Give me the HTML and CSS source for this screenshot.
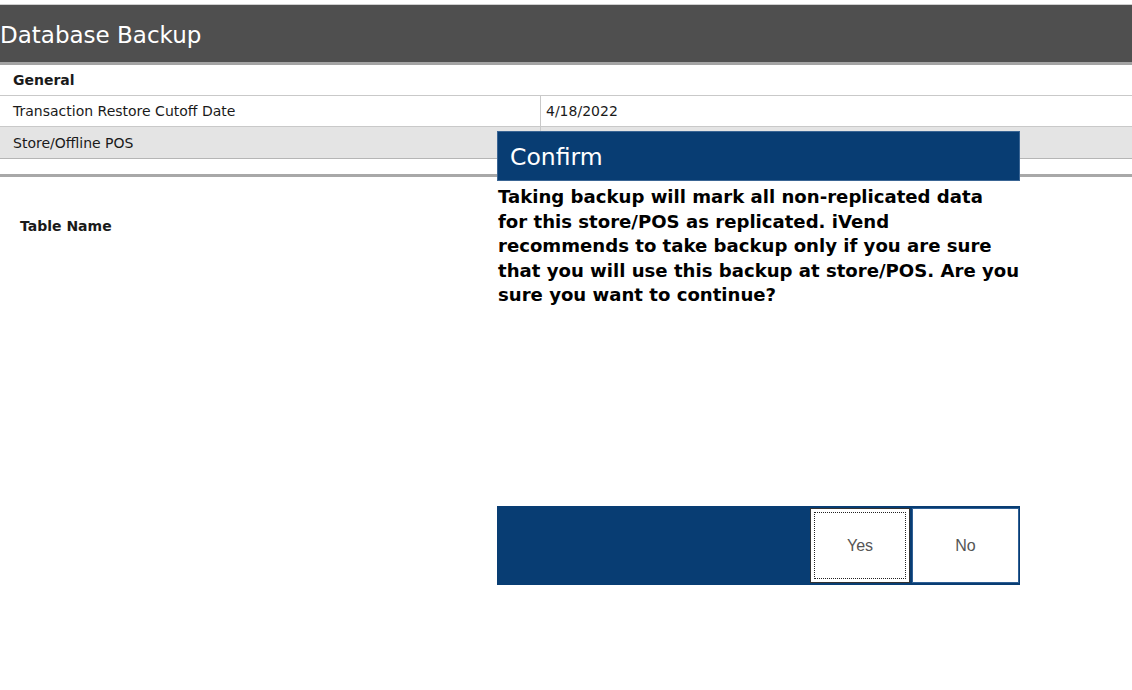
FILE: index.html
```html
<!DOCTYPE html>
<html lang="en">
<head>
<meta charset="UTF-8" />
<title>Database Backup</title>
<link rel="stylesheet" href="styles.css">
</head>
<body>
  <header class="page-title">Database Backup</header>

  <section class="props">
    <div class="prop-row prop-group">General</div>
    <div class="prop-row">
      <div class="prop-name">Transaction Restore Cutoff Date</div>
      <div class="prop-value">4/18/2022</div>
    </div>
    <div class="prop-row prop-alt">
      <div class="prop-name">Store/Offline POS</div>
      <div class="prop-value"></div>
    </div>
  </section>

  <section class="tables">
    <div class="tables-head">Table Name</div>
  </section>

  <div class="dialog">
    <div class="dialog-title">Confirm</div>
    <div class="dialog-body">
      Taking backup will mark all non-replicated data<br>
      for this store/POS as replicated. iVend<br>
      recommends to take backup only if you are sure<br>
      that you will use this backup at store/POS. Are you<br>
      sure you want to continue?
    </div>
    <div class="dialog-buttons">
      <button class="btn btn-focus">Yes</button>
      <button class="btn">No</button>
    </div>
  </div>
</body>
</html>
```

FILE: styles.css
```css
/* Reset */
* {
  box-sizing: border-box;
}
body {
  margin: 0;
  font-family: 'DejaVu Sans', Tahoma, Verdana, sans-serif;
  font-size: 14px;
  color: #1a1a1a;
  background: #fff;
  min-height: 100vh;
  position: relative;
}

/* Header */
.page-title {
  margin-top: 4px;
  border-top: 1px solid #cfcfcf;
  border-bottom: 3px solid #a3a3a3;
  background: #4f4f4f;
  color: #fff;
  height: 61px;
  padding-top: 15px;
  font-size: 23px;
  line-height: 30px;
}

/* Properties */
.props {
  border-bottom: 1px solid #b5b5b5;
}
.prop-row {
  display: flex;
  height: 31px;
  align-items: center;
  border-bottom: 1px solid #c9c9c9;
}
.prop-row:last-child {
  border-bottom: none;
}
.prop-group {
  padding-left: 13px;
  font-weight: bold;
}
.prop-alt {
  background: #e4e4e4;
}
.prop-name {
  width: 540px;
  padding-left: 13px;
}
.prop-value {
  flex: 1;
  align-self: stretch;
  display: flex;
  align-items: center;
  padding-left: 5px;
  border-left: 1px solid #c9c9c9;
}

/* Tables */
.tables {
  margin-top: 15px;
  border-top: 3px solid #a8a8a8;
}
.tables-head {
  padding: 41px 0 0 20px;
  font-weight: bold;
}

/* Dialog */
.dialog {
  position: absolute;
  left: 497px;
  top: 131px;
  width: 523px;
  background: #fff;
}
.dialog-title {
  background: #083d73;
  border: 1px solid #3a6594;
  color: #fff;
  height: 50px;
  padding: 12px 0 0 12px;
  font-size: 23.5px;
  line-height: 26px;
}
.dialog-body {
  height: 325px;
  padding: 4px 0 0 1px;
  font-size: 18.1px;
  font-weight: bold;
  line-height: 24.5px;
  color: #000;
  white-space: nowrap;
}
.dialog-buttons {
  display: flex;
  justify-content: flex-end;
  gap: 2px;
  height: 79px;
  padding: 1px 0;
  background: #083d73;
  border: 1px solid #083d73;
}
.btn {
  width: 100px;
  height: 100%;
  background: #fff;
  border: 1px solid #2e5f95;
  font-family: 'Liberation Sans', Arial, sans-serif;
  font-size: 16px;
  color: #555;
}
.btn-focus {
  border: 1px solid #333;
  outline: 1px dotted #222;
  outline-offset: -5px;
}
.btn + .btn {
  width: 107px;
}
```
